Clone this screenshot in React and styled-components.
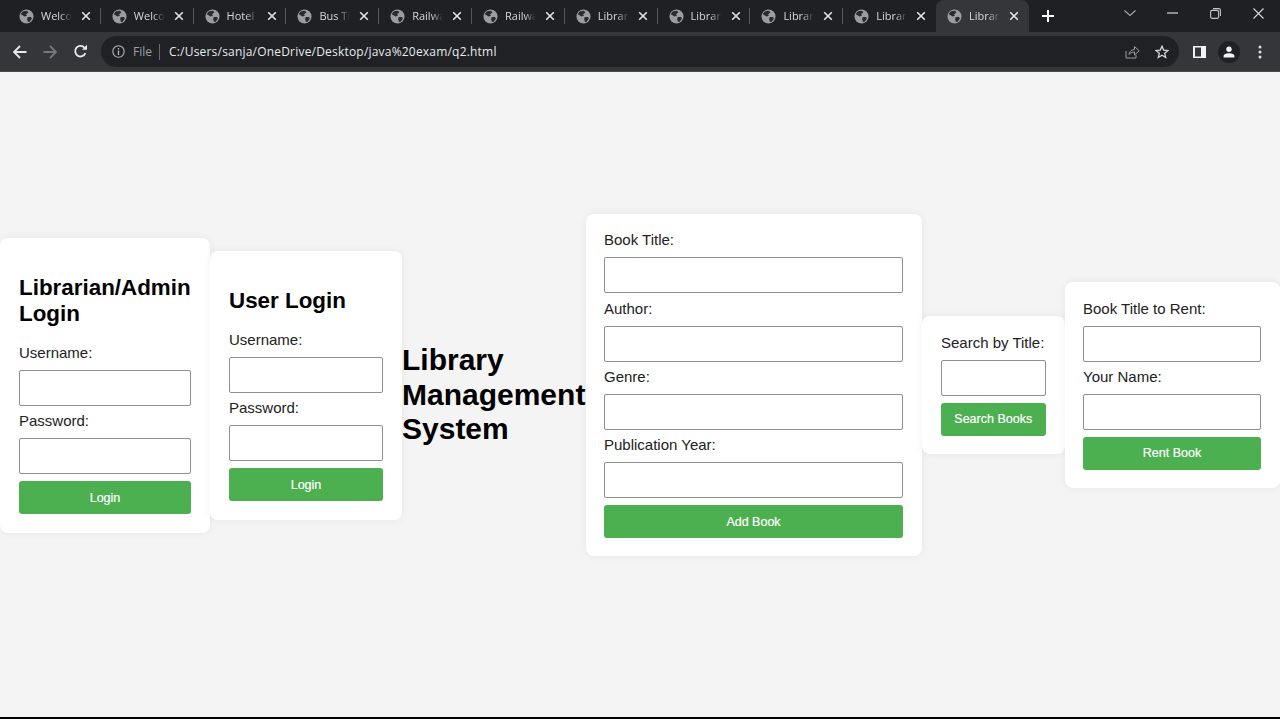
import React from 'react';
import styled, { createGlobalStyle } from 'styled-components';

const GlobalStyle = createGlobalStyle`
    html, body {
        margin: 0;
        padding: 0;
        height: 100%;
        overflow: hidden;
        background: #f4f4f4;
    }
    * { box-sizing: border-box; }
`

const Page = styled.div`
    width: 1280px;
    height: 719px;
    display: flex;
    flex-direction: column;
    background: #f4f4f4;
    border-bottom: 2px solid #000;
`
const TabStrip = styled.div`
    height: 32px;
    flex-shrink: 0;
    display: flex;
    padding-left: 8px;
    background: #1f2023;
    font-family: "Open Sans", sans-serif;
    font-size: 11px;
`
const Tab = styled.div`
    position: relative;
    width: 92.8px;
    height: 32px;
    display: flex;
    align-items: center;
    padding-left: 11px;
    border-radius: 8px 8px 0 0;
    background: ${props => props.$active ? '#35363a' : 'transparent'};
    color: #d6d7da;
`
const TabDivider = styled.span`
    position: absolute;
    right: 0;
    top: 8px;
    height: 16px;
    width: 1px;
    background: #55565a;
`
const TabIcon = styled.svg`
    width: 15px;
    height: 15px;
    flex-shrink: 0;
`
const TabTitle = styled.span`
    width: 36px;
    margin-left: 7px;
    padding-bottom: 2px;
    white-space: nowrap;
    -webkit-mask-image: linear-gradient(to right, #000 19px, transparent 31px);
    mask-image: linear-gradient(to right, #000 19px, transparent 31px);
`
const TabClose = styled.svg`
    width: 10px;
    height: 10px;
    margin-left: 4px;
    flex-shrink: 0;
`
const NewTab = styled.svg`
    width: 14px;
    height: 14px;
    margin: 9px 0 0 12px;
    flex-shrink: 0;
`
const WindowControls = styled.div`
    margin-left: auto;
    display: flex;
    align-items: flex-start;
`
const WindowButton = styled.div`
    width: 43px;
    height: 26px;
    display: flex;
    align-items: center;
    justify-content: center;
`
const Toolbar = styled.div`
    height: 40px;
    flex-shrink: 0;
    display: flex;
    align-items: center;
    padding-left: 5px;
    background: #35363a;
    border-bottom: 1px solid #4a4b4f;
`
const NavButton = styled.div`
    width: 30px;
    height: 30px;
    display: flex;
    align-items: center;
    justify-content: center;
`
const AddressBar = styled.div`
    width: 1078px;
    height: 31px;
    margin-left: 6px;
    padding: 0 10px 0 11px;
    display: flex;
    align-items: center;
    border-radius: 16px;
    background: #202124;
    font-family: "Open Sans", sans-serif;
    font-size: 12px;
`
const SiteLabel = styled.span`
    margin-left: 8px;
    padding-right: 7px;
    height: 16px;
    line-height: 16px;
    border-right: 1px solid #6a6b6f;
    color: #9aa0a6;
`
const Url = styled.span`
    margin-left: 9px;
    color: #e8eaed;
    letter-spacing: 0.2px;
`
const BarActions = styled.div`
    margin-left: auto;
    display: flex;
    align-items: center;
    gap: 15.5px;
`
const PanelIcon = styled.svg`
    width: 13px;
    height: 12px;
    margin-left: 14px;
`
const Avatar = styled.div`
    width: 22px;
    height: 22px;
    margin: 0 18px 0 12px;
    display: flex;
    align-items: center;
    justify-content: center;
    border-radius: 50%;
    background: #202124;
`

const Main = styled.main`
    width: 1280px;
    height: 626.4px;
    display: flex;
    align-items: center;
    font-family: "Liberation Sans", Arial, sans-serif;
`
const Card = styled.section`
    width: ${props => props.$width}px;
    flex-shrink: 0;
    padding: 18.4px 19px 18.4px ${props => props.$inset || 19}px;
    background: #fff;
    border-radius: 8px;
    box-shadow: 0 0 10px rgba(0, 0, 0, 0.06);
`
const CardHeading = styled.h2`
    margin: 19px 0 18px;
    font-size: 22.4px;
    line-height: 26px;
    font-weight: 700;
    color: #000;
`
const Title = styled.h1`
    width: 184px;
    flex-shrink: 0;
    margin: 20px 0 0;
    font-size: 30px;
    line-height: 34.6px;
    font-weight: 700;
    color: #000;
`
const Label = styled.label`
    display: block;
    height: 17px;
    margin-bottom: 8px;
    font-size: 15px;
    line-height: 15px;
    color: #222;
`
const Input = styled.input`
    display: block;
    width: 100%;
    height: 36px;
    margin-bottom: 7.2px;
    padding: 0;
    background: #fff;
    border: 1px solid #8f8f8f;
    border-radius: 2px;
`
const Button = styled.button`
    display: block;
    width: 100%;
    height: 33px;
    margin-top: 0.5px;
    padding: 0;
    border: none;
    border-radius: 3px;
    background: #4caf50;
    color: #fff;
    font-family: "Liberation Sans", Arial, sans-serif;
    font-size: 12.5px;
    font-weight: 400;
    -webkit-text-stroke: 0.2px #fff;
`

const Globe = () => (
    <TabIcon viewBox="0 0 16 16">
        <circle cx="8" cy="8" r="7.5" fill="#9b9da0" />
        <path d="M4.2 2.4 L8.6 1.8 L10 3.6 L7.6 5.6 L8.4 7.2 L6 8 L2.8 6.2 L1.8 5.2 Z" fill="#2a2b2e" />
        <path d="M9.4 8.6 L13 8.6 L13.6 10.6 L10.8 14 L9.4 13.4 L8.6 10.6 Z" fill="#2a2b2e" />
    </TabIcon>
);

const Close = () => (
    <TabClose viewBox="0 0 10 10">
        <path d="M1.2 1.2 L8.8 8.8 M8.8 1.2 L1.2 8.8" stroke="#e3e4e6" strokeWidth="1.6" />
    </TabClose>
);

const tabs = ['Welco', 'Welco', 'Hotel', 'Bus Ti', 'Railwa', 'Railwa', 'Librar', 'Librar', 'Librar', 'Librar', 'Librar'];

const BrowserChrome = () => (
    <>
        <TabStrip>
            {tabs.map((name, i) => (
                <Tab key={i} $active={i === 10}>
                    <Globe />
                    <TabTitle>{name}</TabTitle>
                    <Close />
                    {i < 9 && <TabDivider />}
                </Tab>
            ))}
            <NewTab viewBox="0 0 14 14">
                <path d="M7 1 V13 M1 7 H13" stroke="#fff" strokeWidth="2" />
            </NewTab>
            <WindowControls>
                <WindowButton>
                    <svg width="14" height="8" viewBox="0 0 14 8"><path d="M1.5 1.5 L7 6.5 L12.5 1.5" fill="none" stroke="#a9aaad" strokeWidth="1.1" /></svg>
                </WindowButton>
                <WindowButton>
                    <svg width="11" height="2" viewBox="0 0 11 2"><path d="M0 1 H11" stroke="#d5d6d8" strokeWidth="1.2" /></svg>
                </WindowButton>
                <WindowButton>
                    <svg width="11" height="11" viewBox="0 0 11 11"><rect x="0.6" y="2.4" width="8" height="8" rx="1.5" fill="none" stroke="#c5c6c8" strokeWidth="1.1" /><path d="M3 0.6 H8.8 Q10.4 0.6 10.4 2.2 V8" fill="none" stroke="#c5c6c8" strokeWidth="1.1" /></svg>
                </WindowButton>
                <WindowButton>
                    <svg width="11" height="11" viewBox="0 0 11 11"><path d="M0.5 0.5 L10.5 10.5 M10.5 0.5 L0.5 10.5" stroke="#d5d6d8" strokeWidth="1.1" /></svg>
                </WindowButton>
            </WindowControls>
        </TabStrip>
        <Toolbar>
            <NavButton>
                <svg width="14" height="14" viewBox="0 0 14 14"><path d="M13.5 7 H1.5 M7 1 L1 7 L7 13" fill="none" stroke="#e8eaed" strokeWidth="1.8" /></svg>
            </NavButton>
            <NavButton>
                <svg width="14" height="14" viewBox="0 0 14 14"><path d="M0.5 7 H12.5 M7 1 L13 7 L7 13" fill="none" stroke="#77787b" strokeWidth="1.8" /></svg>
            </NavButton>
            <NavButton>
                <svg width="15" height="15" viewBox="0 0 15 15"><path d="M12.4 9.2 A5.3 5.3 0 1 1 11.6 3.8" fill="none" stroke="#e8eaed" strokeWidth="1.8" /><path d="M9 5.8 H14 V0.8 Z" fill="#e8eaed" /></svg>
            </NavButton>
            <AddressBar>
                <svg width="13" height="13" viewBox="0 0 13 13"><circle cx="6.5" cy="6.5" r="5.7" fill="none" stroke="#b4b6b9" strokeWidth="1.1" /><path d="M6.5 5.6 V10 M6.5 3 V4.4" stroke="#b4b6b9" strokeWidth="1.3" /></svg>
                <SiteLabel>File</SiteLabel>
                <Url>C:/Users/sanja/OneDrive/Desktop/java%20exam/q2.html</Url>
                <BarActions>
                    <svg width="15" height="14" viewBox="0 0 15 14"><path d="M1 6 V13 H11 V10" fill="none" stroke="#9a9b9e" strokeWidth="1" /><path d="M4 9.5 C4.5 6 7 4.5 9.5 4.5 V1.5 L14.2 5.8 L9.5 10 V7 C7.5 7 5.5 7.6 4 9.5 Z" fill="none" stroke="#9a9b9e" strokeWidth="1" /></svg>
                    <svg width="14" height="14" viewBox="0 0 14 14"><path d="M7 1.2 L8.7 5.1 L13 5.5 L9.7 8.3 L10.7 12.5 L7 10.3 L3.3 12.5 L4.3 8.3 L1 5.5 L5.3 5.1 Z" fill="none" stroke="#d5d6d8" strokeWidth="1.3" /></svg>
                </BarActions>
            </AddressBar>
            <PanelIcon viewBox="0 0 13 12">
                <rect width="13" height="12" fill="#f1f3f4" />
                <rect x="2" y="1.5" width="6" height="9" fill="#35363a" />
            </PanelIcon>
            <Avatar>
                <svg width="12" height="12" viewBox="0 0 12 12"><circle cx="6" cy="3.2" r="2.7" fill="#f1f3f4" /><path d="M0.6 11.4 V9.8 C0.6 8 3.6 7.2 6 7.2 C8.4 7.2 11.4 8 11.4 9.8 V11.4 Z" fill="#f1f3f4" /></svg>
            </Avatar>
            <svg width="4" height="14" viewBox="0 0 4 14"><circle cx="2" cy="2" r="1.5" fill="#dfe0e2" /><circle cx="2" cy="7" r="1.5" fill="#dfe0e2" /><circle cx="2" cy="12" r="1.5" fill="#dfe0e2" /></svg>
        </Toolbar>
    </>
);

const Field = ({ label, type = 'text' }) => (
    <>
        <Label>{label}</Label>
        <Input type={type} />
    </>
);

export default function App() {
    return (
        <Page>
            <GlobalStyle />
            <BrowserChrome />
            <Main>
                <Card $width={210}>
                    <CardHeading>Librarian/Admin Login</CardHeading>
                    <Field label="Username:" />
                    <Field label="Password:" type="password" />
                    <Button>Login</Button>
                </Card>
                <Card $width={192}>
                    <CardHeading>User Login</CardHeading>
                    <Field label="Username:" />
                    <Field label="Password:" type="password" />
                    <Button>Login</Button>
                </Card>
                <Title>Library Management System</Title>
                <Card $width={336} $inset={18}>
                    <Field label="Book Title:" />
                    <Field label="Author:" />
                    <Field label="Genre:" />
                    <Field label="Publication Year:" />
                    <Button>Add Book</Button>
                </Card>
                <Card $width={142.5}>
                    <Field label="Search by Title:" />
                    <Button>Search Books</Button>
                </Card>
                <Card $width={215.5} $inset={18.5}>
                    <Field label="Book Title to Rent:" />
                    <Field label="Your Name:" />
                    <Button>Rent Book</Button>
                </Card>
            </Main>
        </Page>
    );
}
